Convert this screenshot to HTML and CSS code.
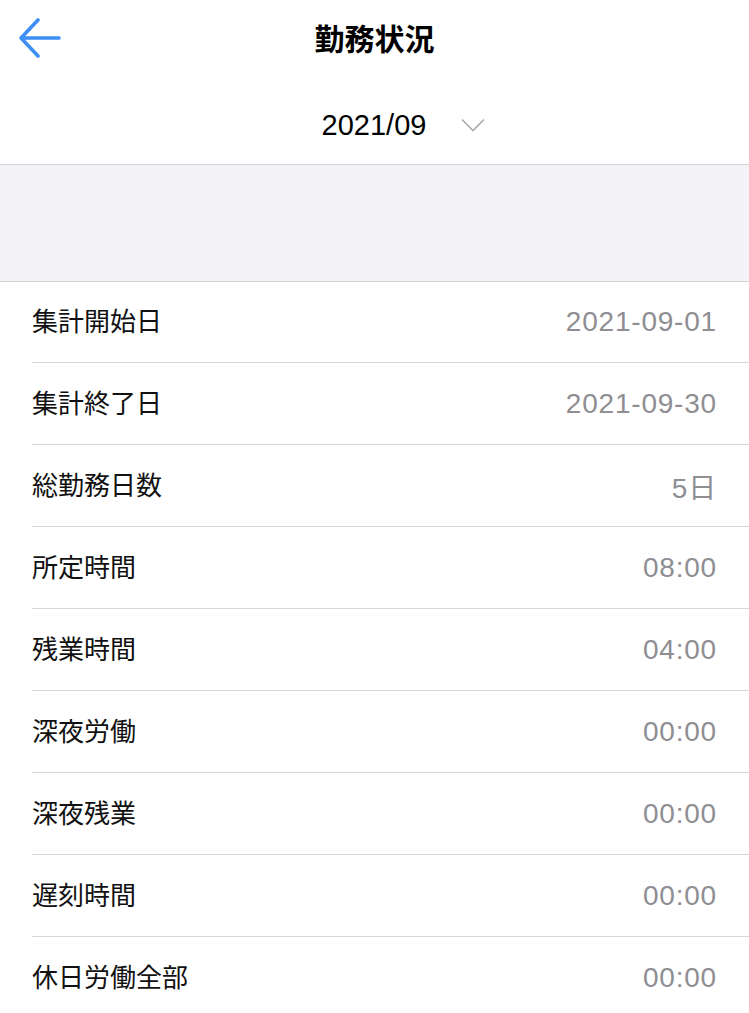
FILE: index.html
```html
<!DOCTYPE html>
<html lang="ja">
<head>
  <meta charset="UTF-8" />
  <meta name="viewport" content="width=device-width, initial-scale=1.0" />
  <title>勤務状況</title>
  <link rel="stylesheet" href="styles.css">
</head>
<body>
  <header class="top">
    <div class="navbar">
      <a class="back" href="#">
        <svg width="42" height="40" viewBox="0 0 42 40">
          <path d="M19 2 L2 20 L19 38 M2 20 H40" fill="none" stroke="#3d8ef6" stroke-width="3.6" stroke-linecap="round" stroke-linejoin="round"/>
        </svg>
      </a>
      <h1 class="title">勤務状況</h1>
      <span></span>
    </div>
    <div class="month">
      <span class="month-text">2021/09</span>
      <svg class="chevron" width="24" height="14" viewBox="0 0 24 14">
        <polyline points="1,1.5 12,12.5 23,1.5" fill="none" stroke="#ababab" stroke-width="1.6"/>
      </svg>
    </div>
  </header>

  <div class="spacer"></div>

  <ul class="list">
    <li class="row"><span class="label">集計開始日</span><span class="value">2021-09-01</span></li>
    <li class="row"><span class="label">集計終了日</span><span class="value">2021-09-30</span></li>
    <li class="row"><span class="label">総勤務日数</span><span class="value">5日</span></li>
    <li class="row"><span class="label">所定時間</span><span class="value">08:00</span></li>
    <li class="row"><span class="label">残業時間</span><span class="value">04:00</span></li>
    <li class="row"><span class="label">深夜労働</span><span class="value">00:00</span></li>
    <li class="row"><span class="label">深夜残業</span><span class="value">00:00</span></li>
    <li class="row"><span class="label">遅刻時間</span><span class="value">00:00</span></li>
    <li class="row"><span class="label">休日労働全部</span><span class="value">00:00</span></li>
  </ul>
</body>
</html>
```

FILE: styles.css
```css
body {
  margin: 0;
  background: #ffffff;
  font-family: "Liberation Sans", "Noto Sans CJK JP", sans-serif;
  color: #111111;
  overflow: hidden;
}
.top {
  border-bottom: 1px solid #d4d4d6;
}
.navbar {
  display: grid;
  grid-template-columns: 1fr auto 1fr;
  align-items: center;
  height: 78px;
  box-sizing: border-box;
  padding-bottom: 4px;
}
.back {
  display: flex;
  padding-left: 19px;
  padding-top: 2px;
}
.title {
  margin: 0;
  font-family: "Noto Sans CJK JP", sans-serif;
  font-size: 30px;
  font-weight: 700;
  line-height: 1;
  color: #000000;
}
.month {
  display: flex;
  justify-content: center;
  align-items: center;
  gap: 35px;
  height: 86px;
  padding-left: 58px;
  padding-top: 8px;
  box-sizing: border-box;
}
.month-text {
  font-size: 29px;
  line-height: 1;
  color: #000000;
}
.chevron {
  display: block;
}
.spacer {
  height: 116px;
  background: #f2f2f7;
  border-bottom: 1px solid #d4d4d6;
}
.list {
  list-style: none;
  margin: 0;
  padding: 0 0 0 32px;
}
.row {
  display: flex;
  justify-content: space-between;
  align-items: center;
  height: 82px;
  box-sizing: border-box;
  padding-right: 32px;
  padding-bottom: 5px;
  border-bottom: 1px solid #d9d9db;
}
.row:first-child {
  height: 81px;
}
.label {
  font-family: "Noto Sans CJK JP", sans-serif;
  font-size: 26px;
  color: #111111;
}
.value {
  font-size: 28px;
  letter-spacing: 0.8px;
  padding-top: 5px;
  color: #8e8e93;
}
```
